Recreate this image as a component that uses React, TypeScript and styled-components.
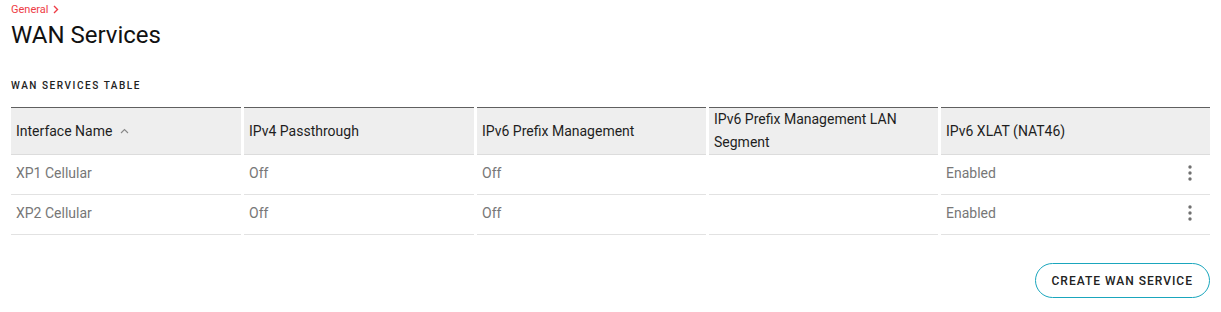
import React from 'react';
import styled, { createGlobalStyle } from 'styled-components';

interface ServiceRow {
    name: string;
    ipv4: string;
    prefix: string;
    lanSegment: string;
    xlat: string;
}

const GlobalStyle = createGlobalStyle`
    body {
        margin: 0;
        background: #ffffff;
        font-family: Roboto, "Liberation Sans", Arial, sans-serif;
    }
`;

const Page = styled.div`
    padding: 0 11px;
`;

const Breadcrumb = styled.div`
    display: flex;
    align-items: center;
    gap: 5px;
    height: 18px;
    font-size: 11px;
    color: #ee3d46;
`;

const Title = styled.h1`
    margin: 3px 0 0;
    font-size: 24px;
    font-weight: 400;
    line-height: 28px;
    color: #111;
`;

const SectionLabel = styled.h2`
    margin: 30px 0 0;
    font-size: 10px;
    font-weight: 500;
    letter-spacing: 1.55px;
    line-height: 14px;
    color: #222;
`;

const Table = styled.div`
    display: grid;
    grid-template-columns: 230px 230px 229px 229px 1fr;
    column-gap: 3px;
    margin-top: 14px;
`;

const HeadCell = styled.div`
    display: flex;
    align-items: center;
    gap: 8px;
    height: 46px;
    padding: 0 5px;
    background: #eeeeee;
    border-top: 1px solid #5f5f5f;
    border-bottom: 1px solid #dcdcdc;
    font-size: 14px;
    font-weight: 400;
    line-height: 23px;
    color: #1e1e1e;
`;

const Cell = styled.div`
    display: flex;
    align-items: center;
    justify-content: space-between;
    height: 35px;
    padding: 0 5px 4px;
    border-bottom: 1px solid #e2e2e2;
    font-size: 14px;
    color: #777;
`;

const MenuButton = styled.button`
    display: flex;
    align-items: center;
    justify-content: center;
    width: 24px;
    height: 24px;
    margin-right: 3px;
    padding: 0;
    border: none;
    background: transparent;
    cursor: pointer;
`;

const Footer = styled.div`
    display: flex;
    justify-content: flex-end;
    margin-top: 28px;
`;

const CreateButton = styled.button`
    height: 35px;
    padding: 0 16px;
    border: 1px solid #1aa6bd;
    border-radius: 18px;
    background: #fff;
    font-family: inherit;
    font-size: 12px;
    font-weight: 500;
    letter-spacing: 1px;
    color: #222;
    cursor: pointer;
`;

const rows: ServiceRow[] = [
    { name: 'XP1 Cellular', ipv4: 'Off', prefix: 'Off', lanSegment: '', xlat: 'Enabled' },
    { name: 'XP2 Cellular', ipv4: 'Off', prefix: 'Off', lanSegment: '', xlat: 'Enabled' },
];

const Chevron = () => (
    <svg width="6" height="9" viewBox="0 0 6 9">
        <path d="M1 1l3.5 3.5L1 8" fill="none" stroke="#ee3d46" strokeWidth="1.4" />
    </svg>
);

const SortUp = () => (
    <svg width="9" height="6" viewBox="0 0 9 6">
        <path d="M1 5l3.5-3.5L8 5" fill="none" stroke="#888" strokeWidth="1.1" />
    </svg>
);

const Kebab = () => (
    <svg width="4" height="16" viewBox="0 0 4 16">
        <circle cx="2" cy="2" r="1.7" fill="#707070" />
        <circle cx="2" cy="8" r="1.7" fill="#707070" />
        <circle cx="2" cy="14" r="1.7" fill="#707070" />
    </svg>
);

const App = () => {
    return (
        <Page>
            <GlobalStyle />
            <Breadcrumb>
                General <Chevron />
            </Breadcrumb>
            <Title>WAN Services</Title>
            <SectionLabel>WAN SERVICES TABLE</SectionLabel>
            <Table>
                <HeadCell>
                    Interface Name <SortUp />
                </HeadCell>
                <HeadCell>IPv4 Passthrough</HeadCell>
                <HeadCell>IPv6 Prefix Management</HeadCell>
                <HeadCell>IPv6 Prefix Management LAN Segment</HeadCell>
                <HeadCell>IPv6 XLAT (NAT46)</HeadCell>
                {rows.map((row) => (
                    <React.Fragment key={row.name}>
                        <Cell>{row.name}</Cell>
                        <Cell>{row.ipv4}</Cell>
                        <Cell>{row.prefix}</Cell>
                        <Cell>{row.lanSegment}</Cell>
                        <Cell>
                            {row.xlat}
                            <MenuButton aria-label="More actions">
                                <Kebab />
                            </MenuButton>
                        </Cell>
                    </React.Fragment>
                ))}
            </Table>
            <Footer>
                <CreateButton>CREATE WAN SERVICE</CreateButton>
            </Footer>
        </Page>
    );
};

export default App;
